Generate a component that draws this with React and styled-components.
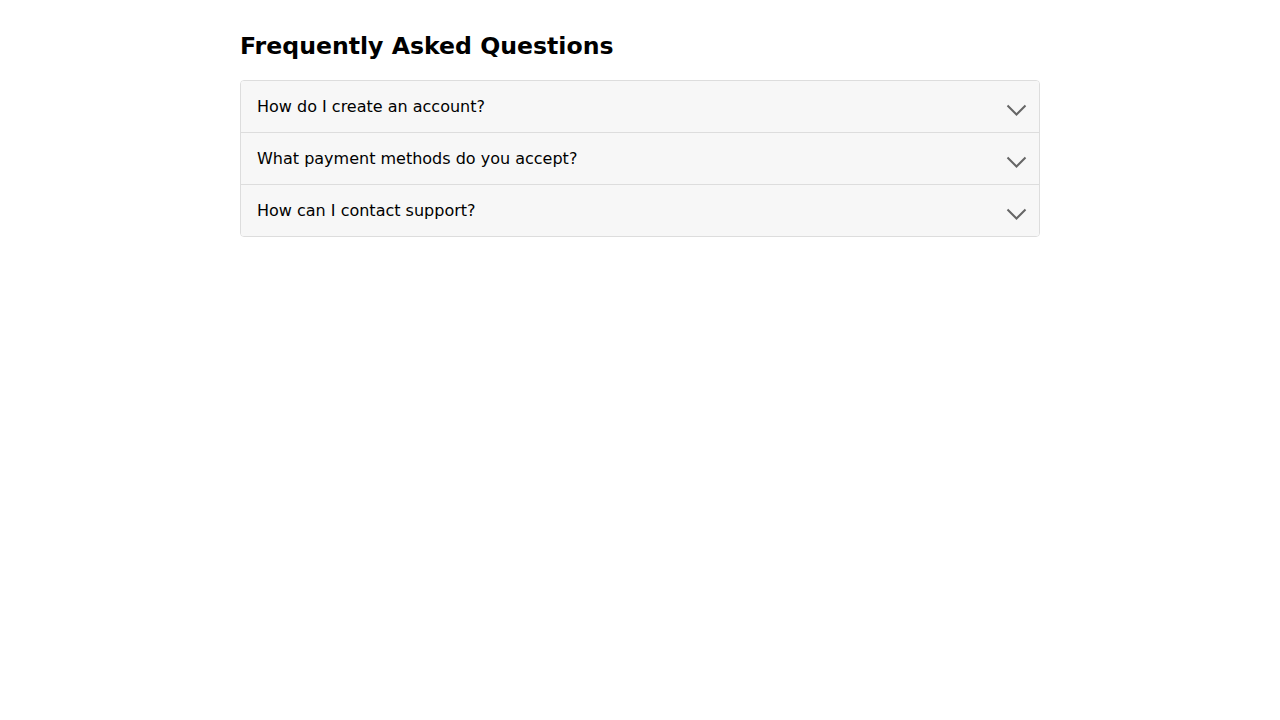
import React from "react";
import styled, { createGlobalStyle } from "styled-components";

const Global = createGlobalStyle`
  html, body { margin: 0; padding: 0; background: #fff; }
  body { font-family: "DejaVu Sans", sans-serif; color: #000; }
`;

const Page = styled.main`
  max-width: 800px;
  margin: 0 auto;
  padding-top: 32px;
`;

const Title = styled.h1`
  font-size: 23.6px;
  font-weight: bold;
  line-height: 28px;
  margin: 0 0 20px;
`;

const List = styled.div`
  border: 1px solid #dddddd;
  border-radius: 4px;
  overflow: hidden;
`;

const Item = styled.div`
  background: #f7f7f7;
  & + & { border-top: 1px solid #dddddd; }
`;

const Question = styled.button`
  display: flex;
  width: 100%;
  align-items: flex-start;
  justify-content: space-between;
  padding: 16px 13px 16px 16px;
  border: 0;
  background: transparent;
  font-family: "DejaVu Sans", sans-serif;
  font-size: 16px;
  line-height: 19px;
  color: #000;
  text-align: left;
  cursor: pointer;
`;

const Icon = styled.svg`
  flex: none;
  overflow: visible;
`;

const Chevron = () => (
  <Icon width="20" height="19" viewBox="0 0 20 19" fill="none">
    <polyline points="1.5,8.5 10.5,17.5 19.5,8.5" stroke="#666" strokeWidth="2" />
  </Icon>
);

const questions = [
  "How do I create an account?",
  "What payment methods do you accept?",
  "How can I contact support?",
];

export default function App() {
  return (
    <>
      <Global />
      <Page>
        <Title>Frequently Asked Questions</Title>
        <List>
          {questions.map((q) => (
            <Item key={q}>
              <Question>
                <span>{q}</span>
                <Chevron />
              </Question>
            </Item>
          ))}
        </List>
      </Page>
    </>
  );
}
